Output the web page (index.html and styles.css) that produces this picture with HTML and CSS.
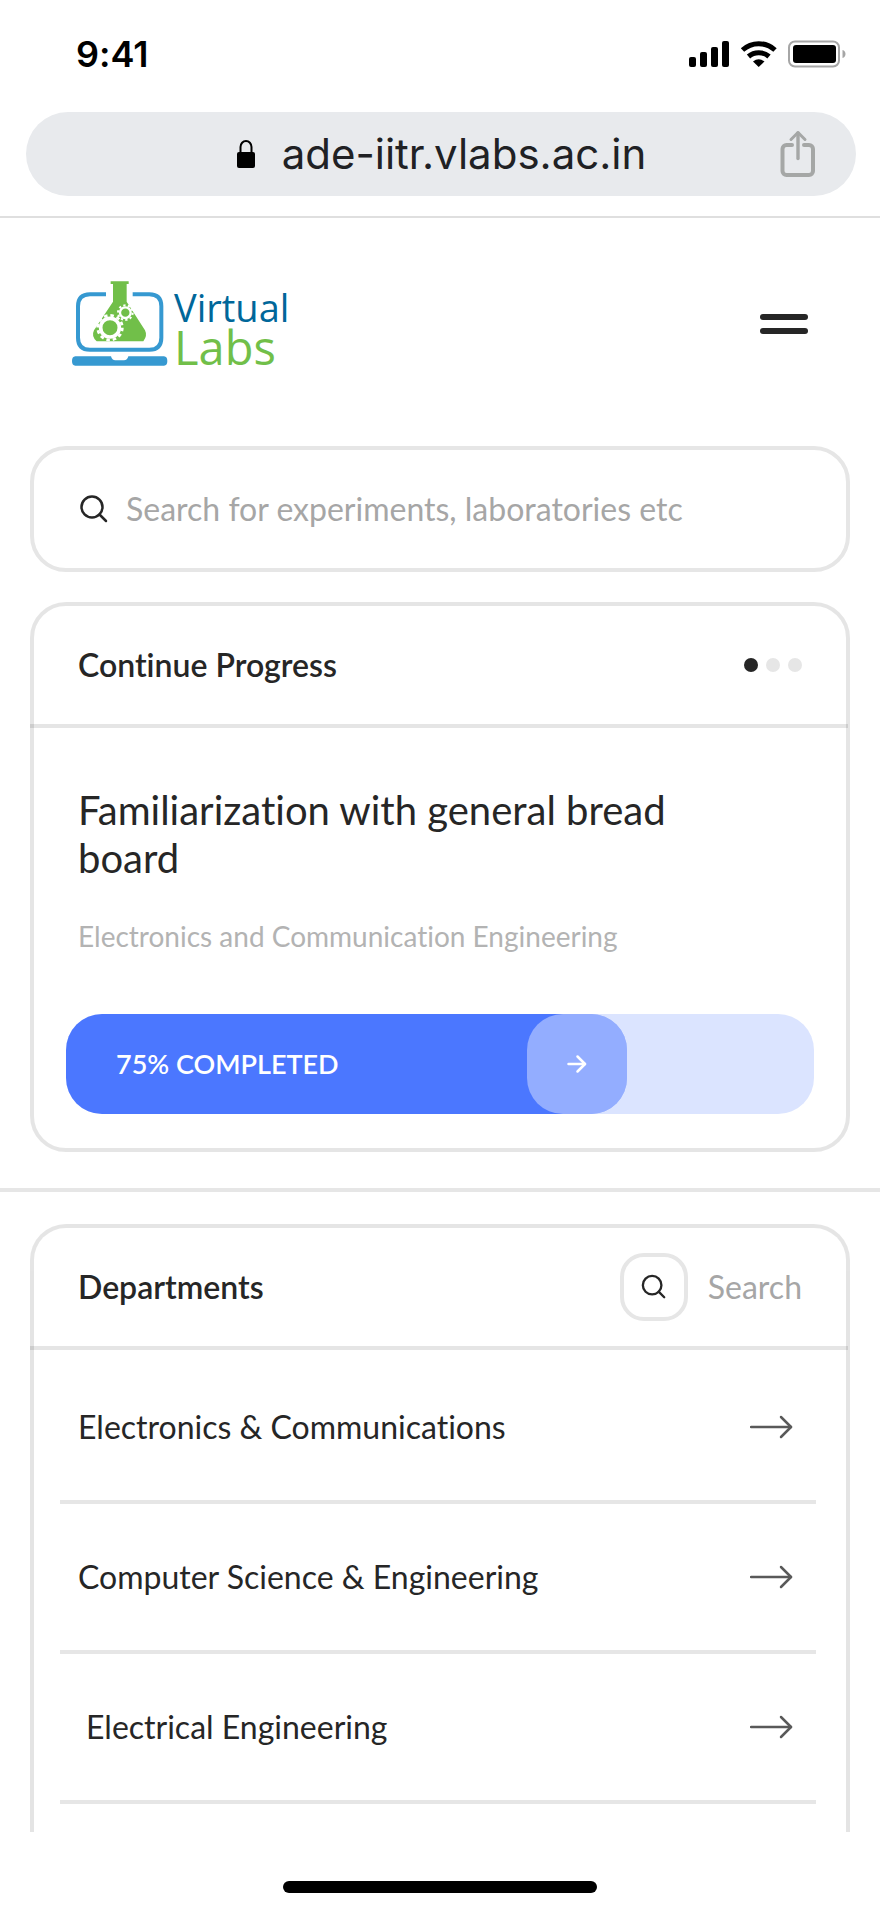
FILE: index.html
```html
<!DOCTYPE html>
<html lang="en">
<head>
    <meta charset="UTF-8">
    <meta name="viewport" content="width=device-width, initial-scale=1.0">
    <title>Virtual Labs</title>
    <link rel="stylesheet" href="styles.css">
</head>
<body>
    <div class="status-bar">
        <span class="time">9:41</span>
        <svg class="status-icons" width="160" height="28" viewBox="688 40 160 28" aria-hidden="true">
            <rect x="689" y="57" width="7" height="10" rx="2"/>
            <rect x="700" y="52" width="7" height="15" rx="2"/>
            <rect x="711" y="47" width="7" height="20" rx="2"/>
            <rect x="722" y="41" width="7" height="26" rx="2"/>
            <path d="M742.5 50 A24 24 0 0 1 775 50" fill="none" stroke="#000" stroke-width="5"/>
            <path d="M748.5 56.5 A15.500 15.500 0 0 1 769 56.500" fill="none" stroke="#000" stroke-width="5"/>
            <path d="M753 61.500 Q758.700 57 764.500 61.500 L758.700 67 Z"/>
            <rect x="789" y="41.500" width="50" height="25" rx="6" fill="none" stroke="#a6a6a6" stroke-width="2"/>
            <rect x="793" y="45" width="43" height="18" rx="3"/>
            <path d="M842.500 50 C846.500 51 846.500 57 842.500 58 Z" fill="#a6a6a6"/>
        </svg>
    </div>

    <div class="browser-bar">
        <div class="address">
            <div class="site">
                <svg width="20" height="30" viewBox="0 0 20 30" aria-hidden="true">
                    <path d="M4.500 14 V8 a5.500 6 0 0 1 11 0 V14" fill="none" stroke="#000" stroke-width="2"/>
                    <rect x="1" y="13" width="18" height="16" rx="2"/>
                </svg>
                <span class="url">ade-iitr.vlabs.ac.in</span>
            </div>
            <button class="share" type="button" aria-label="Share">
                <svg width="36" height="48" viewBox="0 2 36 48" fill="none" stroke="#a5a7a6" stroke-width="4" stroke-linecap="round" stroke-linejoin="round">
                    <path d="M12 17 H6.500 a4 4 0 0 0 -4 4 V43 a4 4 0 0 0 4 4 H29 a4 4 0 0 0 4 -4 V21 a4 4 0 0 0 -4 -4 H24"/>
                    <path d="M18 30.500 V5" stroke-width="3.400"/>
                    <path d="M11 11.500 L18 4.500 L25 11.500" stroke-width="3"/>
                </svg>
            </button>
        </div>
    </div>

    <header class="header">
        <a class="logo" href="#">
            <svg class="logo-mark" width="96" height="86" viewBox="38 32 288 258" aria-hidden="true">
                <path d="M140 72 H92 Q56 72 56 108 V202 Q56 238 92 238 H270 Q306 238 306 202 V108 Q306 72 270 72 H220" fill="none" stroke="#3699d1" stroke-width="12"/>
                <path d="M48 258 H155 Q158 270 168 270 H194 Q204 270 207 258 H314 Q324 259 324 272 Q324 286 314 286 H48 Q38 286 38 272 Q38 259 48 258 Z" fill="#3699d1"/>
                <path d="M154 33 H208 V41 H202 V94 L257 180 Q265 196 252 213 H112 Q95 198 104 180 L161 94 V41 H154 Z" fill="#71bf49"/>
                <circle cx="152" cy="172" r="28" fill="none" stroke="#fff" stroke-width="11"/>
                <circle cx="152" cy="172" r="37" fill="none" stroke="#fff" stroke-width="8" stroke-dasharray="10.600 8.770"/>
                <circle cx="198" cy="127" r="16" fill="none" stroke="#fff" stroke-width="7"/>
                <circle cx="198" cy="127" r="22" fill="none" stroke="#fff" stroke-width="6" stroke-dasharray="6.800 7.020"/>
            </svg>
            <span class="logo-text">
                <span class="logo-virtual">Virtual</span>
                <span class="logo-labs">Labs</span>
            </span>
        </a>
        <button class="menu" type="button" aria-label="Menu">
            <span class="menu-line"></span>
            <span class="menu-line"></span>
        </button>
    </header>

    <main>
        <section class="learn">
            <label class="search-box">
                <svg class="search-icon" width="28" height="28" viewBox="0 0 28 28" aria-hidden="true">
                    <circle cx="12" cy="12" r="10.500"/>
                    <path d="M19.500 19.500 L26 26"/>
                </svg>
                <input class="search-input" type="search" placeholder="Search for experiments, laboratories etc" aria-label="Search for experiments, laboratories etc">
            </label>

            <article class="card">
                <div class="card-header">
                    <h2>Continue Progress</h2>
                    <div class="dots">
                        <span class="dot active"></span>
                        <span class="dot"></span>
                        <span class="dot"></span>
                    </div>
                </div>
                <div class="card-body">
                    <h3>Familiarization with general bread board</h3>
                    <p class="subject">Electronics and Communication Engineering</p>
                    <div class="progress">
                        <div class="progress-fill" style="width: 75%">
                            <span class="progress-label">75% COMPLETED</span>
                            <button class="progress-next" type="button" aria-label="Continue">
                                <svg width="20" height="20" viewBox="0 0 20 20" fill="none" stroke="#fff" stroke-width="2.500" stroke-linecap="round" stroke-linejoin="round">
                                    <path d="M1.500 10 H18"/>
                                    <path d="M10.500 2.500 L18 10 L10.500 17.500"/>
                                </svg>
                            </button>
                        </div>
                    </div>
                </div>
            </article>
        </section>

        <section class="browse">
            <div class="card departments">
                <div class="card-header">
                    <h2>Departments</h2>
                    <button class="dept-search" type="button">
                        <span class="dept-search-icon">
                            <svg class="search-icon" width="26" height="26" viewBox="0 0 28 28" aria-hidden="true">
                                <circle cx="12" cy="12" r="10"/>
                                <path d="M19 19 L25 25"/>
                            </svg>
                        </span>
                        <span>Search</span>
                    </button>
                </div>
                <ul class="dept-list">
                    <li>
                        <a class="dept" href="#">
                            <span>Electronics &amp; Communications</span>
                            <svg class="arrow" width="44" height="24" viewBox="0 0 44 24"><path d="M1 12 H41"/><path d="M31 2 L41 12 L31 22"/></svg>
                        </a>
                    </li>
                    <li>
                        <a class="dept" href="#">
                            <span>Computer Science &amp; Engineering</span>
                            <svg class="arrow" width="44" height="24" viewBox="0 0 44 24"><path d="M1 12 H41"/><path d="M31 2 L41 12 L31 22"/></svg>
                        </a>
                    </li>
                    <li>
                        <a class="dept indent" href="#">
                            <span>Electrical Engineering</span>
                            <svg class="arrow" width="44" height="24" viewBox="0 0 44 24"><path d="M1 12 H41"/><path d="M31 2 L41 12 L31 22"/></svg>
                        </a>
                    </li>
                </ul>
            </div>
        </section>
    </main>

    <div class="home-bar"><span></span></div>
</body>
</html>
```
FILE: styles.css
```css
* {
    box-sizing: border-box;
}
body {
    margin: 0;
    background-color: #fff;
    color: #262626;
    font-family: Lato, sans-serif;
    font-size: 32px;
    line-height: 40px;
    font-variant-ligatures: none;
}
h2, h3, p, ul {
    margin: 0;
    padding: 0;
}
button {
    padding: 0;
    border: none;
    background: none;
    font: inherit;
    color: inherit;
    cursor: pointer;
}
a {
    color: inherit;
    text-decoration: none;
}
svg {
    display: block;
    flex-shrink: 0;
}

/* phone and browser chrome */
.status-bar {
    display: flex;
    justify-content: space-between;
    align-items: center;
    height: 108px;
    padding: 0 32px 0 76px;
}
.time {
    font-family: Inter, sans-serif;
    font-size: 36px;
    font-weight: 600;
    color: #000;
}
.browser-bar {
    padding: 4px 24px 20px 26px;
    border-bottom: 2px solid #dfdfdf;
}
.address {
    display: grid;
    grid-template-columns: 36px 1fr 36px;
    align-items: center;
    height: 84px;
    padding: 0 40px;
    border-radius: 42px;
    background-color: #e8eaed;
}
.site {
    display: flex;
    grid-column: 2;
    align-items: center;
    justify-content: center;
    gap: 26px;
}
.url {
    font-family: Inter, sans-serif;
    font-size: 42px;
    color: #202124;
}

.header {
    display: flex;
    justify-content: space-between;
    align-items: center;
    padding: 63px 72px 79px;
}
.logo {
    display: flex;
    align-items: flex-end;
    gap: 6px;
}
.logo-text {
    display: flex;
    flex-direction: column;
    font-family: "Open Sans", sans-serif;
    line-height: 40px;
}
.logo-virtual {
    font-size: 38px;
    color: #00679a;
}
.logo-labs {
    font-size: 47px;
    color: #71bf49;
}
.menu {
    display: flex;
    flex-direction: column;
    gap: 8px;
    width: 48px;
}
.menu-line {
    height: 6px;
    border-radius: 3px;
    background-color: #262626;
}

.learn {
    display: flex;
    flex-direction: column;
    gap: 30px;
    padding: 0 30px 36px;
    border-bottom: 4px solid #e6e6e6;
}
.search-box {
    display: flex;
    align-items: center;
    gap: 18px;
    height: 126px;
    padding: 0 44px 0 46px;
    border: 4px solid #e6e6e6;
    border-radius: 36px;
}
.search-icon {
    fill: none;
    stroke: #262626;
    stroke-width: 2.5;
    stroke-linecap: round;
}
.search-input {
    flex: 1;
    min-width: 0;
    padding: 0;
    border: none;
    outline: none;
    background: none;
    font: inherit;
    color: #262626;
}
.search-input::placeholder {
    color: #a6a6a6;
    opacity: 1;
}

.card {
    border: 4px solid rgba(0, 0, 0, 0.1);
    border-radius: 36px;
}
.card-header {
    display: flex;
    justify-content: space-between;
    align-items: center;
    height: 122px;
    margin: 0 -2px 0 -4px;
    padding: 0 46px 0 48px;
    border-bottom: 4px solid rgba(0, 0, 0, 0.1);
}
h2 {
    font-size: 32px;
    font-weight: 600;
}
.dots {
    display: flex;
    gap: 8px;
}
.dot {
    width: 14px;
    height: 14px;
    border-radius: 50%;
    background-color: #e6e6e6;
}
.dot.active {
    background-color: #262626;
}
.card-body {
    padding: 58px 32px 34px;
}
h3 {
    max-width: 640px;
    padding: 0 12px;
    font-size: 40px;
    font-weight: 400;
    line-height: 48px;
}
.subject {
    padding: 0 12px;
    margin: 36px 0 60px;
    font-size: 28px;
    line-height: 36px;
    color: #b3b3b3;
}
.progress {
    height: 100px;
    border-radius: 36px;
    background-color: #dbe4ff;
}
.progress-fill {
    display: flex;
    justify-content: space-between;
    align-items: center;
    height: 100%;
    padding-left: 50px;
    border-radius: 36px;
    background-color: #4b77ff;
    color: #fff;
}
.progress-label {
    font-size: 27px;
    font-weight: 600;
}
.progress-next {
    display: flex;
    align-items: center;
    justify-content: center;
    width: 100px;
    height: 100px;
    border-radius: 36px;
    background-color: rgba(255, 255, 255, 0.4);
}

.browse {
    padding: 32px 30px 0;
}
.departments {
    border-bottom: none;
    border-radius: 36px 36px 0 0;
}
.dept-search {
    display: flex;
    align-items: center;
    gap: 20px;
    color: #a6a6a6;
}
.dept-search-icon {
    display: flex;
    align-items: center;
    justify-content: center;
    width: 68px;
    height: 68px;
    border: 4px solid #e6e6e6;
    border-radius: 24px;
}
.dept-list {
    padding: 4px 30px 28px 26px;
    list-style: none;
}
.dept {
    display: flex;
    justify-content: space-between;
    align-items: center;
    height: 150px;
    padding: 0 22px 0 18px;
    border-bottom: 4px solid #e6e6e6;
}
.dept.indent {
    padding-left: 26px;
}
.arrow {
    fill: none;
    stroke: #595959;
    stroke-width: 2.5;
    stroke-linecap: round;
    stroke-linejoin: round;
}

.home-bar {
    display: flex;
    justify-content: center;
    padding: 49px 0 19px;
}
.home-bar span {
    width: 314px;
    height: 12px;
    border-radius: 6px;
    background-color: #000;
}
```
